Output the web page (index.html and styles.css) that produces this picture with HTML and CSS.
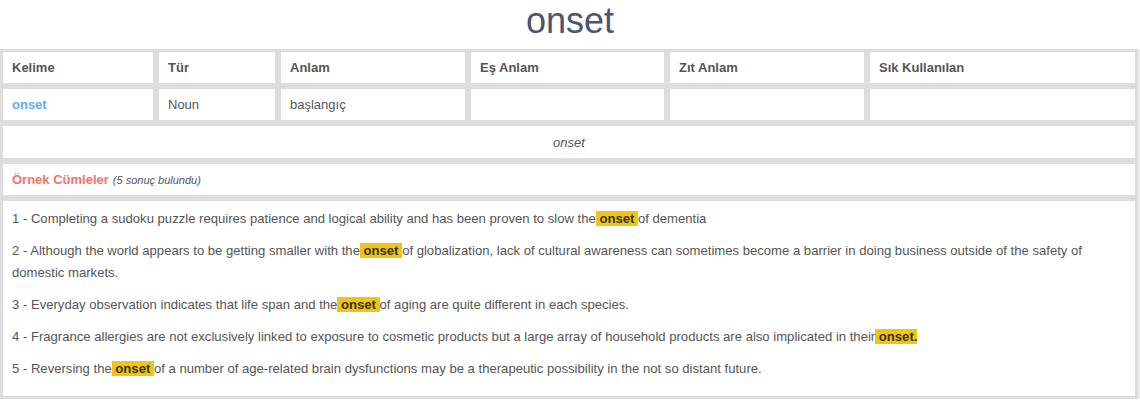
FILE: index.html
```html
<!DOCTYPE html>
<html lang="tr">
<head>
<meta charset="utf-8">
<title>onset</title>
<link rel="stylesheet" href="styles.css">
</head>
<body>
<h1 class="title">onset</h1>
<div class="grid">
  <div class="cell head">Kelime</div>
  <div class="cell head">Tür</div>
  <div class="cell head">Anlam</div>
  <div class="cell head">Eş Anlam</div>
  <div class="cell head">Zıt Anlam</div>
  <div class="cell head">Sık Kullanılan</div>

  <div class="cell"><a class="word" href="#">onset</a></div>
  <div class="cell">Noun</div>
  <div class="cell">başlangıç</div>
  <div class="cell"></div>
  <div class="cell"></div>
  <div class="cell"></div>

  <div class="cell full center"><em>onset</em></div>

  <div class="cell full"><span class="section">Örnek Cümleler</span> <em class="count">(5 sonuç bulundu)</em></div>

  <div class="cell full sentences">
    <p>1 - Completing a sudoku puzzle requires patience and logical ability and has been proven to slow the<mark> onset </mark>of dementia</p>
    <p>2 - Although the world appears to be getting smaller with the<mark> onset </mark>of globalization, lack of cultural awareness can sometimes become a barrier in doing business outside of the safety of domestic markets.</p>
    <p>3 - Everyday observation indicates that life span and the<mark> onset </mark>of aging are quite different in each species.</p>
    <p>4 - Fragrance allergies are not exclusively linked to exposure to cosmetic products but a large array of household products are also implicated in their<mark> onset.</mark></p>
    <p>5 - Reversing the<mark> onset </mark>of a number of age-related brain dysfunctions may be a therapeutic possibility in the not so distant future.</p>
  </div>
</div>
</body>
</html>
```
FILE: styles.css
```css
* { box-sizing: border-box; }
html, body { margin: 0; padding: 0; background: #fff; }
body {
  font-family: "Liberation Sans", Arial, sans-serif;
  font-size: 13px;
  color: #555;
}
.title {
  margin: 0;
  height: 49px;
  line-height: 41px;
  font-size: 36px;
  font-weight: normal;
  text-align: center;
  color: #4a5572;
}
.grid {
  width: 1138px;
  display: grid;
  grid-template-columns: 156px 122px 190px 199px 200px 1fr;
  box-shadow: 2px 0 0 #ececec;
}
.cell {
  border: 3px solid #dddddd;
  min-height: 37px;
  padding: 1px 9px 0;
  display: flex;
  align-items: center;
  line-height: 18px;
}
.head { font-weight: bold; color: #555; }
.full { grid-column: 1 / -1; }
.center { justify-content: center; min-height: 38px; padding-top: 2px; }
.center em { color: #555; }
.word { color: #5dade2; font-weight: bold; text-decoration: none; }
.section { color: #f1736a; font-weight: bold; }
.count { font-size: 11px; color: #555; margin-left: 4px; }
.sentences {
  display: block;
  padding: 7px 9px 6px;
  font-size: 13.1px;
}
.sentences p {
  margin: 0 0 10px;
  line-height: 22px;
}
mark {
  background: #f1c40f;
  color: #333;
  font-weight: bold;
}
```
